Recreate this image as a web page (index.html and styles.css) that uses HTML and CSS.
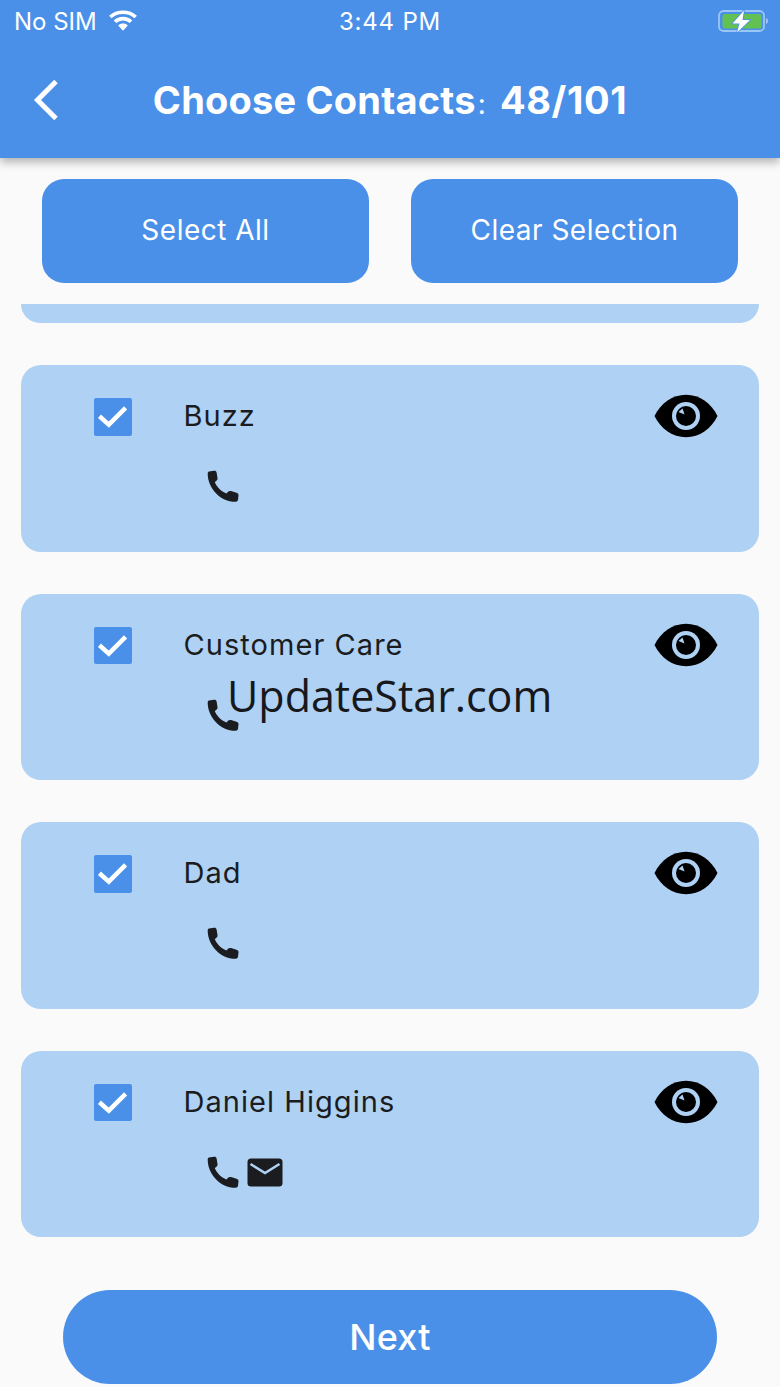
FILE: index.html
```html
<!DOCTYPE html>
<html lang="en">
<head>
<meta charset="utf-8">
<title>Choose Contacts</title>
<link rel="stylesheet" href="styles.css">
</head>
<body>
<svg class="defs" width="0" height="0" aria-hidden="true">
  <symbol id="phone" viewBox="0 0 34 33">
    <path d="M3 1.500 8 .7C9.500 .5 10.300 1.200 10.600 2.500L11.500 8C11.700 9.300 11.200 10.200 10 11L8.800 12.300C10.500 16.500 15 21.500 20.500 23.500L22 21.800C22.800 21 23.800 20.800 25 21.100L30.500 22.700C32 23.200 32.600 24 32.500 25.300L32 29.800C31.800 31 31 31.800 29.500 31.800 14 31.800 1.700 18 1.700 3.500 1.700 2.500 2.200 1.800 3 1.500z"/>
  </symbol>
  <symbol id="eye" viewBox="0 0 64 44">
    <path d="M.5 22C7 9 18.500.8 32 .8S57 9 63.500 22C57 35 45.500 43.200 32 43.200S7 35 .5 22z" fill="#000"/>
    <circle cx="32" cy="22" r="14" fill="#afd1f4"/>
    <circle cx="32" cy="22" r="10" fill="#000"/>
    <path d="M24.500 18 28.500 14.500 30.500 20.500z" fill="#afd1f4"/>
  </symbol>
  <symbol id="mail" viewBox="0 0 36 29">
    <rect x=".5" y=".5" width="35" height="28" rx="3.500" fill="#1a1c20"/>
    <path d="M3.500 6 18 15 32.500 6" fill="none" stroke="#afd1f4" stroke-width="2.600"/>
  </symbol>
  <symbol id="check" viewBox="0 0 38 38">
    <path d="M5.500 18.500 15 27 32 10" fill="none" stroke="#fff" stroke-width="4.500"/>
  </symbol>
</svg>

<div class="screen">
  <header class="appbar">
    <div class="status">
      <div class="status-left">
        <span>No SIM</span>
        <svg class="wifi" viewBox="0 0 32 23" aria-hidden="true">
          <path d="M16 22.800 11.200 17.500C13.800 14.900 18.200 14.900 20.800 17.500z" fill="#fff"/>
          <path d="M8 13.800C12.400 9.500 19.600 9.500 24 13.800M3.300 9C10 2.600 22 2.600 28.700 9" fill="none" stroke="#fff" stroke-width="3.600"/>
        </svg>
      </div>
      <span class="status-time">3:44 PM</span>
      <svg class="battery" viewBox="0 0 51 24" aria-hidden="true">
        <rect x="1" y="2" width="45" height="20" rx="4.500" fill="none" stroke="#9cc6f6" stroke-width="1.800"/>
        <rect x="4.500" y="5" width="39" height="14.500" rx="2.500" fill="#63c154"/>
        <path d="M48 9v6c1.300-.4 2-1.600 2-3s-.7-2.600-2-3z" fill="#9cc6f6"/>
        <path d="M26 1.500 14.500 14.500h7L19 23.500 32 11h-7.500z" fill="#fff" stroke="#4a90e9" stroke-width="1.500" paint-order="stroke"/>
      </svg>
    </div>
    <div class="titlebar">
      <svg class="back" viewBox="0 0 28 42" aria-hidden="true">
        <path d="M24 2.500 5.500 21 24 39.500" fill="none" stroke="#fff" stroke-width="5"/>
      </svg>
      <h1 class="title"><span>Choose Contacts</span><span class="colon">:</span><span class="count">48/101</span></h1>
    </div>
  </header>

  <div class="actions">
    <button class="action">Select All</button>
    <button class="action">Clear Selection</button>
  </div>

  <main class="list">
    <div class="card-tail"></div>

    <section class="card">
      <div class="card-row">
        <span class="checkbox"><svg><use href="#check"/></svg></span>
        <span class="name">Buzz</span>
        <svg class="eye"><use href="#eye"/></svg>
      </div>
      <div class="methods">
        <svg class="phone"><use href="#phone"/></svg>
      </div>
    </section>

    <section class="card">
      <div class="card-row">
        <span class="checkbox"><svg><use href="#check"/></svg></span>
        <span class="name">Customer Care</span>
        <svg class="eye"><use href="#eye"/></svg>
      </div>
      <div class="methods">
        <svg class="phone"><use href="#phone"/></svg>
      </div>
    </section>

    <section class="card">
      <div class="card-row">
        <span class="checkbox"><svg><use href="#check"/></svg></span>
        <span class="name">Dad</span>
        <svg class="eye"><use href="#eye"/></svg>
      </div>
      <div class="methods">
        <svg class="phone"><use href="#phone"/></svg>
      </div>
    </section>

    <section class="card">
      <div class="card-row">
        <span class="checkbox"><svg><use href="#check"/></svg></span>
        <span class="name">Daniel Higgins</span>
        <svg class="eye"><use href="#eye"/></svg>
      </div>
      <div class="methods">
        <svg class="phone"><use href="#phone"/></svg>
        <svg class="mail"><use href="#mail"/></svg>
      </div>
    </section>
  </main>

  <footer class="footer">
    <button class="next">Next</button>
  </footer>

  <div class="watermark">UpdateStar.com</div>
</div>
</body>
</html>
```

FILE: styles.css
```css
* {
  box-sizing: border-box;
}

html,
body {
  margin: 0;
  padding: 0;
}

body {
  background: #fafafa;
  font-family: Inter, "Liberation Sans", sans-serif;
}

.defs {
  position: absolute;
}

.screen {
  position: relative;
  width: 780px;
  height: 1387px;
  display: flex;
  flex-direction: column;
  overflow: hidden;
}

.appbar {
  height: 158px;
  flex: none;
  background: #4a90e9;
  color: #fff;
  box-shadow: 0 4px 9px rgba(0, 0, 0, 0.3);
  position: relative;
  z-index: 2;
}

.status {
  height: 42px;
  padding: 0 14px;
  display: grid;
  grid-template-columns: 1fr auto 1fr;
  align-items: center;
  font-size: 24px;
  font-weight: 400;
}

.status-left {
  display: flex;
  align-items: center;
  gap: 10px;
}

.wifi {
  width: 32px;
  height: 23px;
  margin-top: -3px;
}

.status-time {
  letter-spacing: 0.8px;
}

.battery {
  width: 51px;
  height: 24px;
  justify-self: end;
  margin-right: -3px;
  margin-top: -1px;
}

.titlebar {
  position: relative;
  height: 116px;
  padding-top: 4px;
  display: flex;
  align-items: center;
  justify-content: center;
}

.back {
  position: absolute;
  left: 32px;
  top: 37px;
  width: 28px;
  height: 42px;
}

.title {
  margin: 0;
  font-size: 38px;
  font-weight: 700;
  line-height: 44px;
  letter-spacing: 0.2px;
  display: flex;
  align-items: baseline;
}

.colon {
  font-size: 28px;
  font-weight: 400;
  margin-left: 2px;
}

.count {
  margin-left: 14px;
  letter-spacing: 0.6px;
}

.actions {
  flex: none;
  padding: 21px 42px;
  display: flex;
  justify-content: space-between;
}

.action {
  width: 327px;
  height: 104px;
  border: 0;
  border-radius: 22px;
  padding-bottom: 4px;
  background: #4a90e9;
  color: #fff;
  font: 400 28px Inter, "Liberation Sans", sans-serif;
  letter-spacing: 0.5px;
}

.list {
  flex: 1;
  min-height: 0;
  padding: 0 21px;
  display: flex;
  flex-direction: column;
  gap: 42.300px;
  overflow: hidden;
}

.card-tail {
  flex: none;
  height: 19px;
  background: #afd1f4;
  border-radius: 0 0 20px 20px;
}

.card {
  flex: none;
  height: 186.300px;
  background: #afd1f4;
  border-radius: 20px;
  padding: 29px 41px 0 73px;
}

.card-row {
  display: flex;
  align-items: center;
  height: 44px;
}

.checkbox {
  flex: none;
  width: 37.500px;
  height: 37.500px;
  margin-top: 1px;
  background: #4a90e9;
  border-radius: 2px;
}

.checkbox svg {
  display: block;
  width: 37.500px;
  height: 37.500px;
}

.name {
  flex: 1;
  margin-left: 52px;
  font-size: 29px;
  letter-spacing: 1.050px;
  color: #1a1c20;
  margin-top: -1px;
}

.eye {
  flex: none;
  width: 64px;
  height: 44px;
}

.methods {
  display: flex;
  align-items: center;
  gap: 7px;
  margin: 32px 0 0 112px;
  color: #1a1c20;
}

.phone {
  width: 34px;
  height: 33px;
  fill: currentColor;
}

.mail {
  width: 36px;
  height: 29px;
}

.footer {
  flex: none;
  height: 150px;
  padding: 0 63px 3px;
  display: flex;
  align-items: flex-end;
}

.next {
  width: 100%;
  height: 94px;
  border: 0;
  border-radius: 47px;
  background: #4a90e9;
  color: #fff;
  font: 500 36px Inter, "Liberation Sans", sans-serif;
  letter-spacing: 0.3px;
}

.watermark {
  position: absolute;
  left: 227px;
  top: 668px;
  font-family: "Open Sans", sans-serif;
  font-size: 43px;
  line-height: 56px;
  color: #16181c;
}
```
